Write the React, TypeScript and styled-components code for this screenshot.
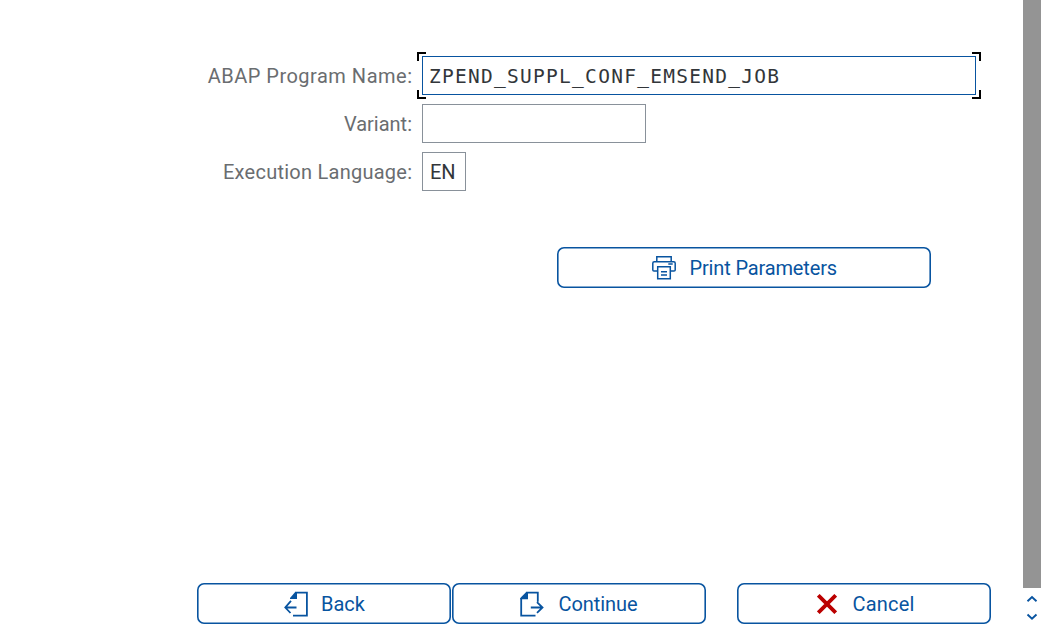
import React from "react";
import styled, { createGlobalStyle } from "styled-components";

const BLUE = "#0854a0";

const GlobalStyle = createGlobalStyle`
  * { box-sizing: border-box; }
  body { margin: 0; background: #fff; overflow: hidden; font-family: Roboto, "Liberation Sans", sans-serif; }
`;

const Screen = styled.div`
  display: flex;
  width: 1056px;
  height: 639px;
`;

const Dialog = styled.main`
  width: 1023px;
  height: 624px;
  display: flex;
  flex-direction: column;
  justify-content: space-between;
  padding-top: 56px;
`;

const Form = styled.form`
  display: flex;
  flex-direction: column;
  gap: 9px;
`;

const Row = styled.div`
  display: grid;
  grid-template-columns: 412px 1fr;
  column-gap: 10px;
  align-items: center;
  height: 39px;
`;

const Label = styled.label<{ $spacing: number }>`
  justify-self: end;
  font-size: 20px;
  line-height: 37px;
  padding-top: 2px;
  color: #6a6d70;
  white-space: nowrap;
  letter-spacing: ${(p) => p.$spacing}px;
  margin-right: -${(p) => p.$spacing}px;
`;

const Field = styled.div<{ $width: number; $focused?: boolean; $mono?: boolean }>`
  position: relative;
  width: ${(p) => p.$width}px;
  height: 39px;
  padding-left: ${(p) => (p.$mono ? 6 : 7)}px;
  border: 1px solid ${(p) => (p.$focused ? BLUE : "#89919a")};
  color: #32363a;
  font-family: ${(p) => (p.$mono ? '"DejaVu Sans Mono", monospace' : "inherit")};
  font-size: ${(p) => (p.$mono ? "19.5px" : "20px")};
  letter-spacing: ${(p) => (p.$mono ? "1.27px" : "0")};
  line-height: ${(p) => (p.$mono ? 40 : 38)}px;
  white-space: nowrap;
`;

const Corner = styled.span<{ $top?: boolean; $left?: boolean }>`
  position: absolute;
  width: 9px;
  height: 9px;
  border: 0 solid #000;
  ${(p) => (p.$top ? "top: -5px; border-top-width: 2px;" : "bottom: -5px; border-bottom-width: 2px;")}
  ${(p) => (p.$left ? "left: -6px; border-left-width: 2px;" : "right: -6px; border-right-width: 2px;")}
`;

const Button = styled.button<{ $width: number; $gap: number; $indent?: number }>`
  display: flex;
  align-items: center;
  justify-content: center;
  gap: ${(p) => p.$gap}px;
  width: ${(p) => p.$width}px;
  height: 41px;
  padding: 0 0 0 ${(p) => p.$indent ?? 0}px;
  background: #fff;
  border: 0;
  box-shadow: inset 0 0 0 1.6px ${BLUE};
  border-radius: 7px;
  color: ${BLUE};
  font: 20px/41px Roboto, "Liberation Sans", sans-serif;
  svg { flex: none; display: block; }
`;

const ButtonText = styled.span<{ $spacing: number }>`
  padding-top: 2px;
  letter-spacing: ${(p) => p.$spacing}px;
`;

const PrintRow = styled.div`
  padding: 47px 0 0 557px;
`;

const Footer = styled.footer`
  display: flex;
  padding-left: 197px;
  gap: 1px;
`;

const Gap = styled.span`
  width: 29px;
`;

const Scrollbar = styled.aside`
  width: 18px;
  display: flex;
  flex-direction: column;
  align-items: center;
`;

const Thumb = styled.div`
  width: 18px;
  height: 588px;
  margin-bottom: 7px;
  background: #949494;
`;

const PrinterIcon = () => (
  <svg width="24" height="25" viewBox="0 0 24 25" fill="none" stroke={BLUE} strokeWidth="1.5">
    <path d="M4.8 6.5V1.8h14.4v4.7M5.5 16H2Q.8 16 .8 15V8.2Q.8 6.8 2.2 6.8h19.6Q23.2 6.8 23.2 8.2V15q0 1-1.2 1h-3.5M16.3 9h4.4" />
    <path d="M5.7 11.8h12.6v12H5.7zM9 16.8h6M9 20h6" />
  </svg>
);

const BackIcon = () => (
  <svg width="24" height="27" viewBox="0 0 24 27" fill="none" stroke={BLUE} strokeWidth="1.8">
    <path d="M11 2.6h11.9v23.1H9M7 10.8 1.3 17.5 6.5 23M1.3 17.5h11.2" />
    <path d="M13 1.9V9H6V8l5.2-6.1z" fill={BLUE} stroke="none" />
  </svg>
);

const ContinueIcon = () => (
  <svg width="24" height="27" viewBox="0 0 24 27" fill="none" stroke={BLUE} strokeWidth="1.8">
    <path d="M6 2.6h11.8v9.2M1.2 8v17.7h14.3M17 12.2l5.5 5.3L17 22.8M10.8 17.5h11.7" />
    <path d="M8 1.9V9.3H.3V8L6.2 1.9z" fill={BLUE} stroke="none" />
  </svg>
);

const CancelIcon = () => (
  <svg width="20" height="20" viewBox="0 0 20 20" fill="none" stroke="#bb0000" strokeWidth="3.8">
    <path d="M1.3 1.3l17.4 17.4M18.7 1.3 1.3 18.7" />
  </svg>
);

const Chevron = ({ down }: { down?: boolean }) => (
  <svg width="12" height="8" viewBox="0 0 12 8" fill="none" stroke={BLUE} strokeWidth="1.9">
    <path d={down ? "M1.5 1.5 6 5.7l4.5-4.2" : "M1.5 6.2 6 2l4.5 4.2"} />
  </svg>
);

const ArrowStack = styled.div`
  display: flex;
  flex-direction: column;
  gap: 10px;
`;

export default function App() {
  return (
    <>
      <GlobalStyle />
      <Screen>
        <Dialog>
          <Form>
            <Row>
              <Label $spacing={0.5}>ABAP Program Name:</Label>
              <Field $width={554} $focused $mono>
                ZPEND_SUPPL_CONF_EMSEND_JOB
                <Corner $top $left />
                <Corner $top />
                <Corner $left />
                <Corner />
              </Field>
            </Row>
            <Row>
              <Label $spacing={0}>Variant:</Label>
              <Field $width={224} />
            </Row>
            <Row>
              <Label $spacing={0.25}>Execution Language:</Label>
              <Field $width={44}>EN</Field>
            </Row>
            <PrintRow>
              <Button type="button" $width={374} $gap={13.5} $indent={1}>
                <PrinterIcon />
                <ButtonText $spacing={-0.15}>Print Parameters</ButtonText>
              </Button>
            </PrintRow>
          </Form>
          <Footer>
            <Button $width={254} $gap={13} $indent={1}>
              <BackIcon />
              <ButtonText $spacing={0}>Back</ButtonText>
            </Button>
            <Button $width={254} $gap={14}>
              <ContinueIcon />
              <ButtonText $spacing={-0.05}>Continue</ButtonText>
            </Button>
            <Gap />
            <Button $width={254} $gap={15} $indent={4}>
              <CancelIcon />
              <ButtonText $spacing={0.2}>Cancel</ButtonText>
            </Button>
          </Footer>
        </Dialog>
        <Scrollbar>
          <Thumb />
          <ArrowStack>
            <Chevron />
            <Chevron down />
          </ArrowStack>
        </Scrollbar>
      </Screen>
    </>
  );
}
